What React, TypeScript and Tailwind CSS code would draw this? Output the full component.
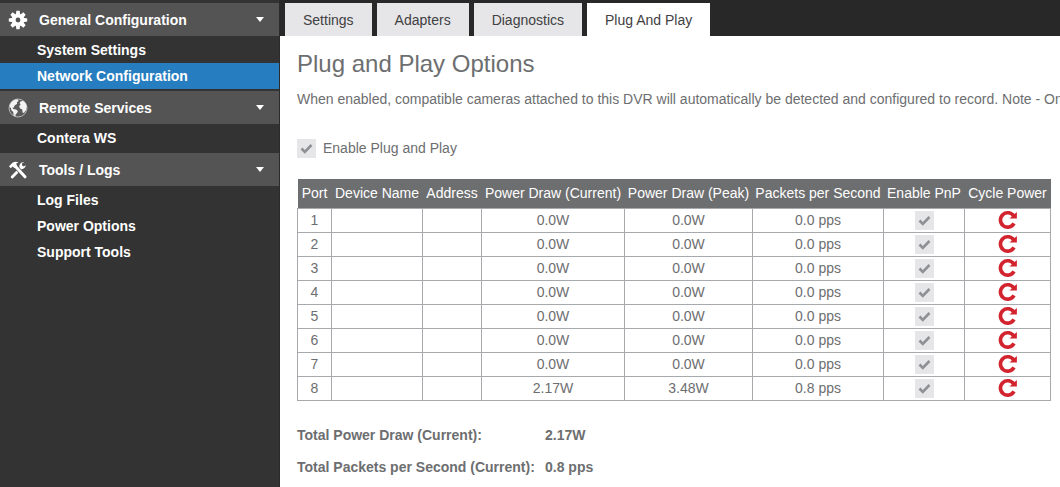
import React from "react";
import clsx from "clsx";

interface portRow {
  port: number;
  current: string;
  peak: string;
  packets: string;
}

const ports: portRow[] = [
  { port: 1, current: "0.0W", peak: "0.0W", packets: "0.0 pps" },
  { port: 2, current: "0.0W", peak: "0.0W", packets: "0.0 pps" },
  { port: 3, current: "0.0W", peak: "0.0W", packets: "0.0 pps" },
  { port: 4, current: "0.0W", peak: "0.0W", packets: "0.0 pps" },
  { port: 5, current: "0.0W", peak: "0.0W", packets: "0.0 pps" },
  { port: 6, current: "0.0W", peak: "0.0W", packets: "0.0 pps" },
  { port: 7, current: "0.0W", peak: "0.0W", packets: "0.0 pps" },
  { port: 8, current: "2.17W", peak: "3.48W", packets: "0.8 pps" },
];

const columns = [
  { title: "Port", width: "w-[34px]" },
  { title: "Device Name", width: "w-[91px]" },
  { title: "Address", width: "w-[59px]" },
  { title: "Power Draw (Current)", width: "w-[143px]" },
  { title: "Power Draw (Peak)", width: "w-[128px]" },
  { title: "Packets per Second", width: "w-[131px]" },
  { title: "Enable PnP", width: "w-[81px]" },
  { title: "Cycle Power", width: "w-[86px]" },
];

function GearIcon() {
  return (
    <svg viewBox="0 0 20 20" className="size-5" aria-hidden="true">
      <g fill="#fff">
        {[0, 45, 90, 135].map((angle) => (
          <path
            key={angle}
            d="M8.4 .8h3.200l.6 4v10.400l-.6 4H8.400l-.6-4V4.800z"
            transform={`rotate(${angle} 10 10)`}
          />
        ))}
        <circle cx="10" cy="10" r="6.2" />
      </g>
      <circle cx="10" cy="10" r="2.4" fill="#545454" />
    </svg>
  );
}

function GlobeIcon() {
  return (
    <svg viewBox="0 0 20 20" className="size-5" aria-hidden="true">
      <circle cx="10" cy="10" r="9" fill="#5a5a5a" stroke="#b5b5b5" />
      <path
        d="M2 6.5C3.4 3.4 6 1.6 9.5 1.3l1.2 1.6-1.9 1.3.4 1.6-2.6 1.6-.7 2-1.5.3 1 1.2 2.6.6 1.9 1.5-.9 2.2-1.2.9-.4 2.4-1.8-1.2-.4-3.2-1.9-1.8-.5-2.4L1.6 9z"
        fill="#f2f2f2"
      />
      <path
        d="M12.8 3.2l2.4-.3c2 1.2 3.4 3.4 3.6 6.1l-1 3.6-1.9 2.4-1.3-.6-.5-3.1-2.1-.8-.8-2.2 1.4-1.9-1-1.4z"
        fill="#f2f2f2"
      />
    </svg>
  );
}

function ToolsIcon() {
  return (
    <svg viewBox="0 0 20 20" className="size-5" aria-hidden="true">
      <path d="M4.2 17L14 7" stroke="#fff" strokeWidth="2.8" strokeLinecap="round" />
      <path
        d="M17.8 5.3l-2.2 1.3-1.7-1.1.1-1.9L16.2 2.3A4 4 0 0 0 11.4 7.2L13.4 9A4 4 0 0 0 17.8 5.3z"
        fill="#fff"
      />
      <path d="M7.6 6.6L17.2 17" stroke="#545454" strokeWidth="4.4" />
      <path d="M7.6 6.6L17 16.8" stroke="#fff" strokeWidth="3" strokeLinecap="round" />
      <path d="M1 6.2L4.8 2.4Q7.5 1 10.5 2.2L8.2 3.6 9 5.8 6.6 8.2 4.7 6.6 2.7 8.2z" fill="#fff" />
    </svg>
  );
}

function CycleIcon() {
  return (
    <svg viewBox="0 0 20 20" className="size-5" aria-hidden="true">
      <path
        d="M15.8 6.2A7.2 7.2 0 1 0 16 13.300"
        fill="none"
        stroke="#d3232e"
        strokeWidth="3.6"
      />
      <path d="M18.900 2V8.400H11.600z" fill="#d3232e" />
    </svg>
  );
}

const groups = [
  {
    title: "General Configuration",
    icon: <GearIcon />,
    items: ["System Settings", "Network Configuration"],
  },
  {
    title: "Remote Services",
    icon: <GlobeIcon />,
    items: ["Contera WS"],
  },
  {
    title: "Tools / Logs",
    icon: <ToolsIcon />,
    items: ["Log Files", "Power Options", "Support Tools"],
  },
];

function Sidebar() {
  return (
    <nav className="w-70 shrink-0 bg-[#333333] border-r border-[#2b2b2b] pt-[3px] text-sm font-bold text-white">
      {groups.map(({ title, icon, items }) => (
        <section key={title}>
          <button
            type="button"
            className="flex h-[33px] w-full items-center bg-[#545454] pl-2 pr-[15px]"
          >
            {icon}
            <span className="ml-[11px] flex-1 text-left">{title}</span>
            <svg viewBox="0 0 8 5" className="h-[5px] w-2" aria-hidden="true">
              <path d="M0 0h8L4 5z" fill="#fff" />
            </svg>
          </button>
          <ul className="pt-px pb-0.5">
            {items.map((item) => (
              <li key={item}>
                <a
                  href="#"
                  className={clsx(
                    "flex h-[26px] items-center pl-[37px]",
                    item === "Network Configuration" && "bg-[#267dc0]"
                  )}
                >
                  {item}
                </a>
              </li>
            ))}
          </ul>
        </section>
      ))}
    </nav>
  );
}

function Tabs() {
  return (
    <div className="flex gap-[5px] bg-[#282828] pt-[3px] pl-[5px]">
      {["Settings", "Adapters", "Diagnostics", "Plug And Play"].map((tab) => (
        <button
          key={tab}
          type="button"
          className={clsx(
            "h-[33px] px-[18px] text-sm text-[#414042]",
            tab === "Plug And Play" ? "bg-white" : "bg-[#e6e6e8]"
          )}
        >
          {tab}
        </button>
      ))}
    </div>
  );
}

interface checkProps {
  id: string;
  label?: string;
}

function Check({ id, label }: checkProps) {
  return (
    <span className="grid size-[19px] place-items-center">
      <input
        id={id}
        type="checkbox"
        defaultChecked
        aria-label={label}
        className="peer col-start-1 row-start-1 size-[19px] appearance-none bg-[#e6e6e8]"
      />
      <svg
        viewBox="0 0 13 11"
        className="pointer-events-none invisible col-start-1 row-start-1 h-[11px] w-[13px] peer-checked:visible"
        aria-hidden="true"
      >
        <path d="M1.5 5.5l3.300 3.300L11.500 2" fill="none" stroke="#8f9093" strokeWidth="2.600" />
      </svg>
    </span>
  );
}

function PortTable() {
  return (
    <table className="table-fixed w-[753px] border-collapse text-center text-sm">
      <thead>
        <tr className="h-[29px] bg-[#6d6e70] text-white">
          {columns.map(({ title, width }) => (
            <th
              key={title}
              className={clsx("whitespace-nowrap p-0 font-normal", width)}
            >
              {title}
            </th>
          ))}
        </tr>
      </thead>
      <tbody>
        {ports.map(({ port, current, peak, packets }) => (
          <tr key={port} className="h-6 *:border *:border-[#a7a9ac] *:p-0">
            <td>{port}</td>
            <td></td>
            <td></td>
            <td>{current}</td>
            <td>{peak}</td>
            <td>{packets}</td>
            <td>
              <div className="flex justify-center">
                <Check id={`pnp-${port}`} label={`Enable PnP on port ${port}`} />
              </div>
            </td>
            <td>
              <button
                type="button"
                aria-label={`Cycle power on port ${port}`}
                className="flex w-full justify-center"
              >
                <CycleIcon />
              </button>
            </td>
          </tr>
        ))}
      </tbody>
    </table>
  );
}

function App() {
  return (
    <div className="flex min-h-screen bg-white font-['Liberation_Sans',Arial,sans-serif] text-[#6d6e70]">
      <Sidebar />
      <main className="min-w-0 flex-1 overflow-hidden">
        <Tabs />
        <div className="pl-[17px]">
          <h1 className="mt-3 text-2xl">Plug and Play Options</h1>
          <p className="mt-[9px] whitespace-nowrap text-sm">
            When enabled, compatible cameras attached to this DVR will
            automatically be detected and configured to record. Note - On
          </p>
          <div className="mt-[29px] flex items-center gap-[7px] text-sm">
            <Check id="enable-pnp" />
            <label htmlFor="enable-pnp">Enable Plug and Play</label>
          </div>
          <div className="mt-[21px]">
            <PortTable />
          </div>
          <dl className="mt-6 grid grid-cols-[248px_auto] gap-y-3 text-sm font-bold">
            <dt>Total Power Draw (Current):</dt>
            <dd>2.17W</dd>
            <dt>Total Packets per Second (Current):</dt>
            <dd>0.8 pps</dd>
          </dl>
        </div>
      </main>
    </div>
  );
}

export default App;
